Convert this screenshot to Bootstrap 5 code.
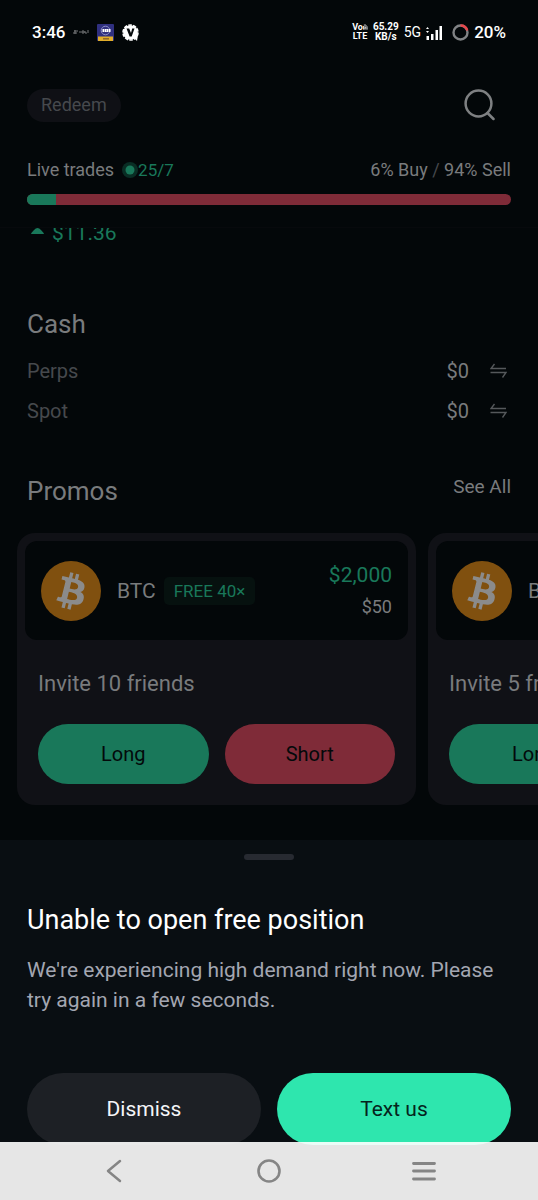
<!DOCTYPE html>
<html lang="en">
<head>
<meta charset="utf-8">
<meta name="viewport" content="width=device-width, initial-scale=1">
<title>Portfolio</title>
<link href="https://cdn.jsdelivr.net/npm/bootstrap@5.3.0/dist/css/bootstrap.min.css" rel="stylesheet">
<style>
  :root { --ink: #797b7d; --dim: #46494d; --up: #19785a; --down: #7f2b38; --base: #030709; --panel: #101116; }
  body { background: var(--base); color: var(--ink); font-family: Roboto, "Liberation Sans", sans-serif; font-size: 20px; line-height: 24px; }
  .btn { --bs-btn-font-size: 20px; --bs-btn-line-height: 24px; --bs-btn-padding-y: 0; }
  a { color: inherit; text-decoration: none; }
  svg { display: block; }
  .up { color: var(--up); }
  .dim { color: var(--dim); }
  .gutter { padding-left: 27px; padding-right: 27px; }

  .statusbar { height: 64px; padding: 0 32px; color: #fff; font-size: 17px; font-weight: 500; }
  .signals { gap: 5px; }
  .stack { font-size: 10px; line-height: 10px; font-weight: 700; text-align: center; }
  .stack-sm { font-size: 9px; line-height: 9px; }
  .net { font-size: 14px; font-weight: 400; }

  .topbar { border-bottom: 1px solid #07090c; }
  .toolbar { height: 82px; }
  .redeem { --bs-btn-font-size: 18px; height: 33px; padding: 0 14px; background: #0f1015; color: var(--dim); border: 0; }
  .trades { font-size: 18px; height: 48px; }
  .count { font-size: 17px; }
  .split { height: 11px; margin-bottom: 22px; background: var(--down); border-radius: 6px; }
  .split .progress-bar { background: var(--up); }

  .gain { height: 17px; padding-left: 31px; font-size: 21px; }
  .section-title { font-size: 26px; line-height: 32px; font-weight: 400; margin: 0; }
  .cash { padding-top: 63px; }
  .cash-list { padding: 11px 4px 0 0; }
  .cash-row { height: 40px; gap: 21px; }
  .promos-head { padding-top: 44px; padding-bottom: 26px; }
  .see-all { font-size: 19px; }

  .promos { gap: 12px; padding: 0 17px; overflow: hidden; }
  .promo { flex: 0 0 399px; background: var(--panel); border-radius: 18px; padding: 8px 8px 21px; }
  .quote { background: var(--base); border-radius: 12px; height: 99px; padding: 0 16px; font-size: 21px; line-height: 32px; }
  .stake { font-size: 18px; }
  .free { font-size: 17px; line-height: 28px; padding: 0 10px; border-radius: 5px; background: #06110f; }
  .invite { font-size: 22px; line-height: 28px; padding: 30px 13px 26px; }
  .actions { padding: 0 13px; }
  .trade { height: 60px; border: 0; color: #03090a; }
  .long { background: var(--up); }
  .short { background: var(--down); }

  .sheet { background: #090e12; margin-top: 35px; padding-top: 14px; color: #a3a6b1; }
  .grip { width: 50px; height: 6px; border-radius: 3px; background: #272a31; }
  .sheet h2 { font-size: 27px; line-height: 32px; font-weight: 400; color: #fff; margin: 44px 0 19px; }
  .sheet p { font-size: 21px; line-height: 30px; margin: 0 0 58px; }
  .answer { --bs-btn-font-size: 21px; height: 72px; border: 0; }
  .dismiss { background: #1d2025; color: #f4f5f8; }
  .textus { background: #2ee6ae; color: #05231c; }
  .sysnav { position: relative; margin-top: -3px; height: 58px; background: rgba(255, 255, 255, .9); padding: 0 36px; }
  .sysnav button { flex: 1 1 0; background: none; border: 0; padding: 0; }
</style>
</head>
<body>
<svg width="0" height="0" class="position-absolute" aria-hidden="true">
  <symbol id="btc" viewBox="0 0 32 32">
    <circle cx="16" cy="16" r="16" fill="#80500f"/>
    <path fill="#8b8b8b" d="M23.189 14.02c.314-2.096-1.283-3.223-3.465-3.975l.708-2.84-1.728-.43-.69 2.765c-.454-.114-.92-.22-1.385-.326l.695-2.783L15.596 6l-.708 2.839c-.376-.086-.746-.17-1.104-.26l.002-.009-2.384-.595-.46 1.846s1.283.294 1.256.312c.7.175.826.638.805 1.006l-.806 3.235c.048.012.11.03.18.057l-.183-.045-1.13 4.532c-.086.212-.303.531-.793.41.018.025-1.256-.313-1.256-.313l-.858 1.978 2.25.561c.418.105.828.215 1.231.318l-.715 2.872 1.727.43.708-2.84c.472.127.93.245 1.378.357l-.706 2.828 1.728.43.715-2.866c2.948.558 5.164.333 6.097-2.333.752-2.146-.037-3.385-1.588-4.192 1.13-.26 1.98-1.003 2.207-2.538zm-3.95 5.538c-.533 2.147-4.148.986-5.32.695l.95-3.805c1.172.293 4.929.872 4.37 3.11zm.535-5.569c-.487 1.953-3.495.96-4.47.717l.86-3.45c.975.243 4.118.696 3.61 2.733z"/>
  </symbol>
  <symbol id="swap" viewBox="0 0 17 16">
    <path d="M16 5.500H1L4.500 1M.5 9.500H16L12.500 14.500" fill="none" stroke="#55585b" stroke-width="1.400"/>
  </symbol>
</svg>

<header class="topbar">
  <div class="statusbar d-flex align-items-center justify-content-between">
    <div class="d-flex align-items-center gap-2">
      <span>3:46</span>
      <svg width="16" height="6" viewBox="0 0 16 6" fill="none" stroke="#77797b"><path d="M1 2h4M0 4h4M2 1v4M6 3h2M9 4V2h2v2zM12 2v2h2M15 1v3"/></svg>
      <svg width="17" height="17" viewBox="0 0 17 17"><rect width="17" height="17" rx="1" fill="#303080"/><path d="M1 12.500h15V17H1z" fill="#e2ae2b"/><path d="M6 14.800h6" stroke="#8e6428" stroke-width="1.500"/><circle cx="8.500" cy="6.500" r="4.300" fill="none" stroke="#8f91c8"/><path d="M5.500 6.500h8" stroke="#fff" stroke-width="3"/><path d="M7.500 5v3M9.500 5.500v2M11.500 5v3" stroke="#55559a" stroke-width=".6"/></svg>
      <svg width="17" height="17" viewBox="0 0 17 17"><circle cx="8.500" cy="8.500" r="7.300" fill="#fff"/><circle cx="8.500" cy="8.500" r="7.500" fill="none" stroke="#fff" stroke-width="1.600" stroke-dasharray="3.500 1.200"/><path d="M11 13l4 4 1-6z" fill="#fff"/><path d="M4.500 4.500h2.700L9 9l1.200-4.500h2.300l-2.800 8H7.600z" fill="#05090b"/></svg>
    </div>
    <div class="signals d-flex align-items-center">
      <div class="stack stack-sm">
        <div class="d-flex"><span>Vo</span><svg width="5" height="9" viewBox="0 0 6 9" fill="none" stroke="#fff"><path d="M.5 7V3Q2 4 1.500 7M1 2Q4 3 3.500 7M2 .5Q6 3 5 7"/></svg></div>
        <div>LTE</div>
      </div>
      <div class="stack">65.29<br>KB/s</div>
      <span class="net">5G</span>
      <svg width="17" height="15" viewBox="0 0 17 15" fill="#fff"><path d="M0 4h3L1.500 2zM0 6h3L1.500 8zM.5 11h2.500v4H.5zM5 9h2.500v6H5zM9.500 5H12v10H9.500zM13.500 1H16v14h-2.500z"/></svg>
      <svg class="ms-1" width="17" height="17" viewBox="0 0 17 17" fill="none" stroke-width="2.400"><circle cx="8.500" cy="8.500" r="7" stroke="#818385"/><path d="M8.500 1.500A7 7 0 0 1 15.300 6.500" stroke="#e7474c"/></svg>
      <span>20%</span>
    </div>
  </div>

  <div class="toolbar gutter d-flex align-items-center justify-content-between">
    <button type="button" class="btn redeem rounded-pill">Redeem</button>
    <button type="button" class="btn border-0 p-0 me-3" aria-label="Search">
      <svg width="31" height="32" viewBox="0 0 31 32" fill="none" stroke="#7e8082" stroke-width="2.500"><circle cx="14.500" cy="14.500" r="12.900"/><path d="M23.500 24l6 6" stroke-linecap="round"/></svg>
    </button>
  </div>

  <div class="gutter">
    <div class="trades d-flex align-items-center justify-content-between">
      <div class="d-flex align-items-center"><span class="me-2">Live trades</span>
        <svg width="16" height="16" viewBox="0 0 16 16"><circle cx="8" cy="8" r="8" fill="#092d24"/><circle cx="8" cy="8" r="4.500" fill="#19785a"/></svg>
        <span class="up count">25/7</span></div>
      <div>6% Buy <span class="dim">/</span> 94% Sell</div>
    </div>
    <div class="progress split" role="progressbar" aria-label="Buy share" aria-valuenow="6" aria-valuemin="0" aria-valuemax="100"><div class="progress-bar" style="width:6%"></div></div>
  </div>
</header>

<main>
  <div class="gain up d-flex align-items-end gap-2 overflow-hidden">
    <svg class="align-self-start" width="13" height="7" viewBox="0 0 13 7"><path d="M0 6q0-1 3-4Q6.500-2 10 2q3 3 3 4z" fill="currentColor"/></svg>
    <span>$11.36</span>
  </div>

  <section class="cash gutter">
    <h2 class="section-title">Cash</h2>
    <div class="cash-list">
      <div class="cash-row d-flex align-items-center"><span class="dim me-auto">Perps</span><span>$0</span>
        <button type="button" class="btn border-0 p-0" aria-label="Transfer perps cash"><svg width="17" height="16"><use href="#swap"/></svg></button></div>
      <div class="cash-row d-flex align-items-center"><span class="dim me-auto">Spot</span><span>$0</span>
        <button type="button" class="btn border-0 p-0" aria-label="Transfer spot cash"><svg width="17" height="16"><use href="#swap"/></svg></button></div>
    </div>
  </section>

  <div class="promos-head gutter d-flex justify-content-between">
    <h2 class="section-title">Promos</h2>
    <a class="see-all" href="#">See All</a>
  </div>

  <div class="promos d-flex">
    <article class="promo">
      <div class="quote d-flex align-items-center">
        <svg class="me-3" width="60" height="60"><use href="#btc"/></svg>
        <span class="me-2">BTC</span><span class="free up">FREE 40×</span>
        <div class="ms-auto text-end"><div class="up">$2,000</div><div class="stake">$50</div></div>
      </div>
      <div class="invite">Invite 10 friends</div>
      <div class="d-flex gap-3 actions">
        <button type="button" class="btn trade long rounded-pill w-50">Long</button>
        <button type="button" class="btn trade short rounded-pill w-50">Short</button>
      </div>
    </article>
    <article class="promo">
      <div class="quote d-flex align-items-center">
        <svg class="me-3" width="60" height="60"><use href="#btc"/></svg>
        <span class="me-2">BTC</span>
      </div>
      <div class="invite">Invite 5 friends</div>
      <div class="d-flex gap-3 actions">
        <button type="button" class="btn trade long rounded-pill w-50">Long</button>
        <button type="button" class="btn trade short rounded-pill w-50">Short</button>
      </div>
    </article>
  </div>
</main>

<section class="sheet gutter" role="dialog" aria-labelledby="sheet-title">
  <div class="grip mx-auto"></div>
  <h2 id="sheet-title">Unable to open free position</h2>
  <p>We're experiencing high demand right now. Please try again in a few seconds.</p>
  <div class="d-flex gap-3">
    <button type="button" class="btn answer dismiss rounded-pill w-50">Dismiss</button>
    <button type="button" class="btn answer textus rounded-pill w-50">Text us</button>
  </div>
</section>

<nav class="sysnav d-flex align-items-center" aria-label="System">
  <button type="button" aria-label="Back"><svg class="mx-auto" width="16" height="24" viewBox="0 0 16 24" fill="none" stroke="#858585" stroke-width="2.500" stroke-linecap="round" stroke-linejoin="round"><path d="M14 2L2 12l12 10"/></svg></button>
  <button type="button" aria-label="Home"><svg class="mx-auto" width="24" height="24" viewBox="0 0 24 24" fill="none" stroke="#858585" stroke-width="2.600"><circle cx="12" cy="12" r="10.500"/></svg></button>
  <button type="button" aria-label="Recent apps"><svg class="mx-auto" width="24" height="24" viewBox="0 0 24 24" stroke="#858585" stroke-width="2.800" stroke-linecap="round"><path d="M1.500 4.500h21M1.500 12h21M1.500 20h21"/></svg></button>
</nav>
<script src="https://cdn.jsdelivr.net/npm/bootstrap@5.3.0/dist/js/bootstrap.bundle.min.js"></script>
</body>
</html>
